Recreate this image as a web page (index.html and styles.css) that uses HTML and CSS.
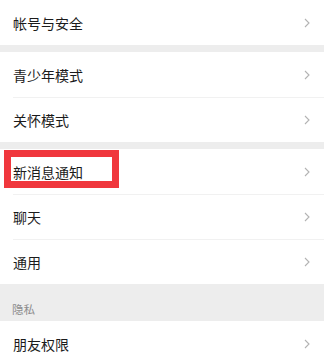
FILE: index.html
```html
<!DOCTYPE html>
<html lang="zh-CN">
<head>
<meta charset="utf-8">
<link rel="stylesheet" href="styles.css">
</head>
<body>
<div class="page">
  <div class="group">
    <div class="row"><span class="label">帐号与安全</span><svg class="chev" viewBox="0 0 6 10"><polyline points="1,1 5,5 1,9"/></svg></div>
  </div>
  <div class="gap"></div>
  <div class="group">
    <div class="row"><span class="label">青少年模式</span><svg class="chev" viewBox="0 0 6 10"><polyline points="1,1 5,5 1,9"/></svg></div>
    <div class="row"><span class="label">关怀模式</span><svg class="chev" viewBox="0 0 6 10"><polyline points="1,1 5,5 1,9"/></svg></div>
  </div>
  <div class="gap"></div>
  <div class="group">
    <div class="row marked"><span class="label">新消息通知</span><svg class="chev" viewBox="0 0 6 10"><polyline points="1,1 5,5 1,9"/></svg><div class="highlight"></div></div>
    <div class="row"><span class="label">聊天</span><svg class="chev" viewBox="0 0 6 10"><polyline points="1,1 5,5 1,9"/></svg></div>
    <div class="row"><span class="label">通用</span><svg class="chev" viewBox="0 0 6 10"><polyline points="1,1 5,5 1,9"/></svg></div>
  </div>
  <div class="section-title">隐私</div>
  <div class="group">
    <div class="row"><span class="label">朋友权限</span><svg class="chev" viewBox="0 0 6 10"><polyline points="1,1 5,5 1,9"/></svg></div>
  </div>
</div>
</body>
</html>
```
FILE: styles.css
```css
html, body {
  margin: 0;
  padding: 0;
  background: #ffffff;
}
body {
  width: 333px;
  height: 360px;
  overflow: hidden;
  font-family: "Noto Sans CJK SC", "Noto Sans", sans-serif;
}
.page {
  width: 324px;
  background: #ffffff;
}
.group {
  background: #ffffff;
}
.row {
  position: relative;
  height: 45px;
  display: flex;
  align-items: center;
  justify-content: space-between;
  padding: 0 14px 0 13px;
  box-sizing: border-box;
}
.row + .row::before {
  content: "";
  position: absolute;
  left: 13px;
  right: 0;
  top: 0;
  height: 1px;
  background: #f1f1f1;
}
.label {
  font-size: 14px;
  color: #1b1b1b;
  line-height: 1;
}
.chev {
  width: 6px;
  height: 10px;
  fill: none;
  stroke: #b3b3b3;
  stroke-width: 1.1;
}
.gap {
  height: 7px;
  background: #ededed;
}
.section-title {
  height: 37px;
  background: #ededed;
  box-sizing: border-box;
  padding: 18px 0 0 12px;
  font-size: 11.5px;
  line-height: 14px;
  color: #8c8c8c;
}
.highlight {
  position: absolute;
  left: 4px;
  top: 1px;
  width: 115px;
  height: 38px;
  box-sizing: border-box;
  border: 7px solid #f0373d;
}
```
